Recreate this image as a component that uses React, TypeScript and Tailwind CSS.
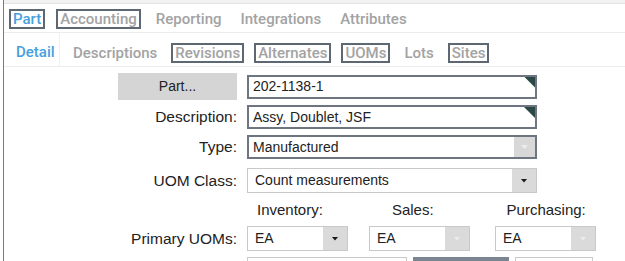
import React from "react";

// tab strips
const topTabs = [
  { label: "Part", active: true, boxed: true },
  { label: "Accounting", boxed: true },
  { label: "Reporting" },
  { label: "Integrations" },
  { label: "Attributes" },
];

const subTabs = [
  { label: "Descriptions" },
  { label: "Revisions", boxed: true },
  { label: "Alternates", boxed: true },
  { label: "UOMs", boxed: true },
  { label: "Lots" },
  { label: "Sites", boxed: true },
];

const Tab = ({ label, active, boxed }: { label: string; active?: boolean; boxed?: boolean }) => (
  <span
    className={
      "px-[2px] leading-[16px] border-2 " +
      (boxed ? "border-[#5d6873] " : "border-transparent ") +
      (active ? "text-[#46a0de]" : "text-[#a3a3a3]")
    }
  >
    {label}
  </span>
);

// little down arrow for the dropdowns
const Arrow = ({ light }: { light?: boolean }) => (
  <div
    className={
      "w-[7px] h-[4px] [clip-path:polygon(0_0,100%_0,50%_100%)] " +
      (light ? "bg-[#ececec]" : "bg-[#1a1a1a]")
    }
  />
);

const Corner = () => (
  <div className="absolute right-0 top-0 w-[11px] h-[11px] bg-[#2c4846] [clip-path:polygon(0_0,100%_0,100%_100%)]" />
);

const Select = ({ value, width, light }: { value: string; width: string; light?: boolean }) => (
  <div className={"h-[25px] flex border border-[#c9c9c9] bg-white " + width}>
    <span className="flex-1 pl-[7px] flex items-center text-[14px] text-[#222]">{value}</span>
    <div className="w-[24px] bg-[#dadada] flex items-center justify-center">
      <Arrow light={light} />
    </div>
  </div>
);

export default function App() {
  return (
    <div className="w-[625px] h-[261px] overflow-hidden bg-white pl-[3px] font-['Liberation_Sans',Arial,sans-serif]">
      <div className="h-full border-l border-[#7b7b7b] flex flex-col">
        <div className="h-[4px] bg-[#f2f2f2] border-b border-[#e4e4e4] shrink-0" />

        {/* main tabs */}
        <div className="h-[29px] shrink-0 flex items-center gap-[11px] pl-[5px] pt-[2px] border-b border-[#ececec] font-['Roboto',sans-serif] font-medium text-[15px]">
          {topTabs.map((t) => (
            <Tab key={t.label} {...t} />
          ))}
        </div>

        {/* sub tabs */}
        <div className="h-[34px] shrink-0 flex items-stretch border-b border-[#ececec] font-['Roboto',sans-serif] font-medium text-[15px]">
          <div className="w-[56px] flex items-center pl-[12px] pt-[6px] border-r border-[#f0f0f0] text-[#46a0de]">
            Detail
          </div>
          <div className="flex items-center gap-[10px] pl-[9px] pt-[6px]">
            {subTabs.map((t) => (
              <Tab key={t.label} {...t} />
            ))}
          </div>
        </div>

        {/* form */}
        <div className="pl-[114px] flex flex-col text-[15.5px] text-[#222]">
          <div className="mt-[6px] flex items-center gap-[10px]">
            <button className="w-[119px] h-[27px] bg-[#d5d5d5] text-[14px] text-[#222]">Part...</button>
            <div className="relative w-[290px] h-[24px] border-2 border-[#6c7580] flex items-center pl-[4px] text-[14px]">
              202-1138-1
              <Corner />
            </div>
          </div>

          <div className="mt-[5px] flex items-center gap-[10px]">
            <span className="w-[119px] text-right">Description:</span>
            <div className="relative w-[290px] h-[24px] border-2 border-[#6c7580] flex items-center pl-[4px] text-[14px]">
              Assy, Doublet, JSF
              <Corner />
            </div>
          </div>

          <div className="mt-[6px] flex items-center gap-[10px]">
            <span className="w-[119px] text-right">Type:</span>
            <div className="w-[290px] h-[24px] border-2 border-[#6c7580] flex">
              <span className="flex-1 pl-[4px] flex items-center text-[14px]">Manufactured</span>
              <div className="w-[21px] bg-[#d8d8d8] flex items-center justify-center">
                <Arrow light />
              </div>
            </div>
          </div>

          <div className="mt-[9px] flex items-center gap-[10px]">
            <span className="w-[119px] text-right">UOM Class:</span>
            <Select value="Count measurements" width="w-[290px]" />
          </div>

          <div className="mt-[10px] flex items-end h-[18px] pl-[139px] text-[15px]">
            <span>Inventory:</span>
            <span className="ml-[69px]">Sales:</span>
            <span className="ml-[73px]">Purchasing:</span>
          </div>

          <div className="mt-[5px] flex items-center gap-[10px]">
            <span className="w-[119px] text-right">Primary UOMs:</span>
            <div className="flex gap-[21px]">
              <Select value="EA" width="w-[101px]" />
              <Select value="EA" width="w-[101px]" light />
              <div className="ml-[4px]">
                <Select value="EA" width="w-[101px]" light />
              </div>
            </div>
          </div>

          <div className="mt-[6px] flex gap-[6px] pl-[129px]">
            <div className="w-[160px] h-[25px] border border-[#c9c9c9]" />
            <div className="w-[96px] h-[25px] bg-[#7b8591]" />
            <div className="w-[78px] h-[25px] border border-[#c9c9c9]" />
          </div>
        </div>
      </div>
    </div>
  );
}
